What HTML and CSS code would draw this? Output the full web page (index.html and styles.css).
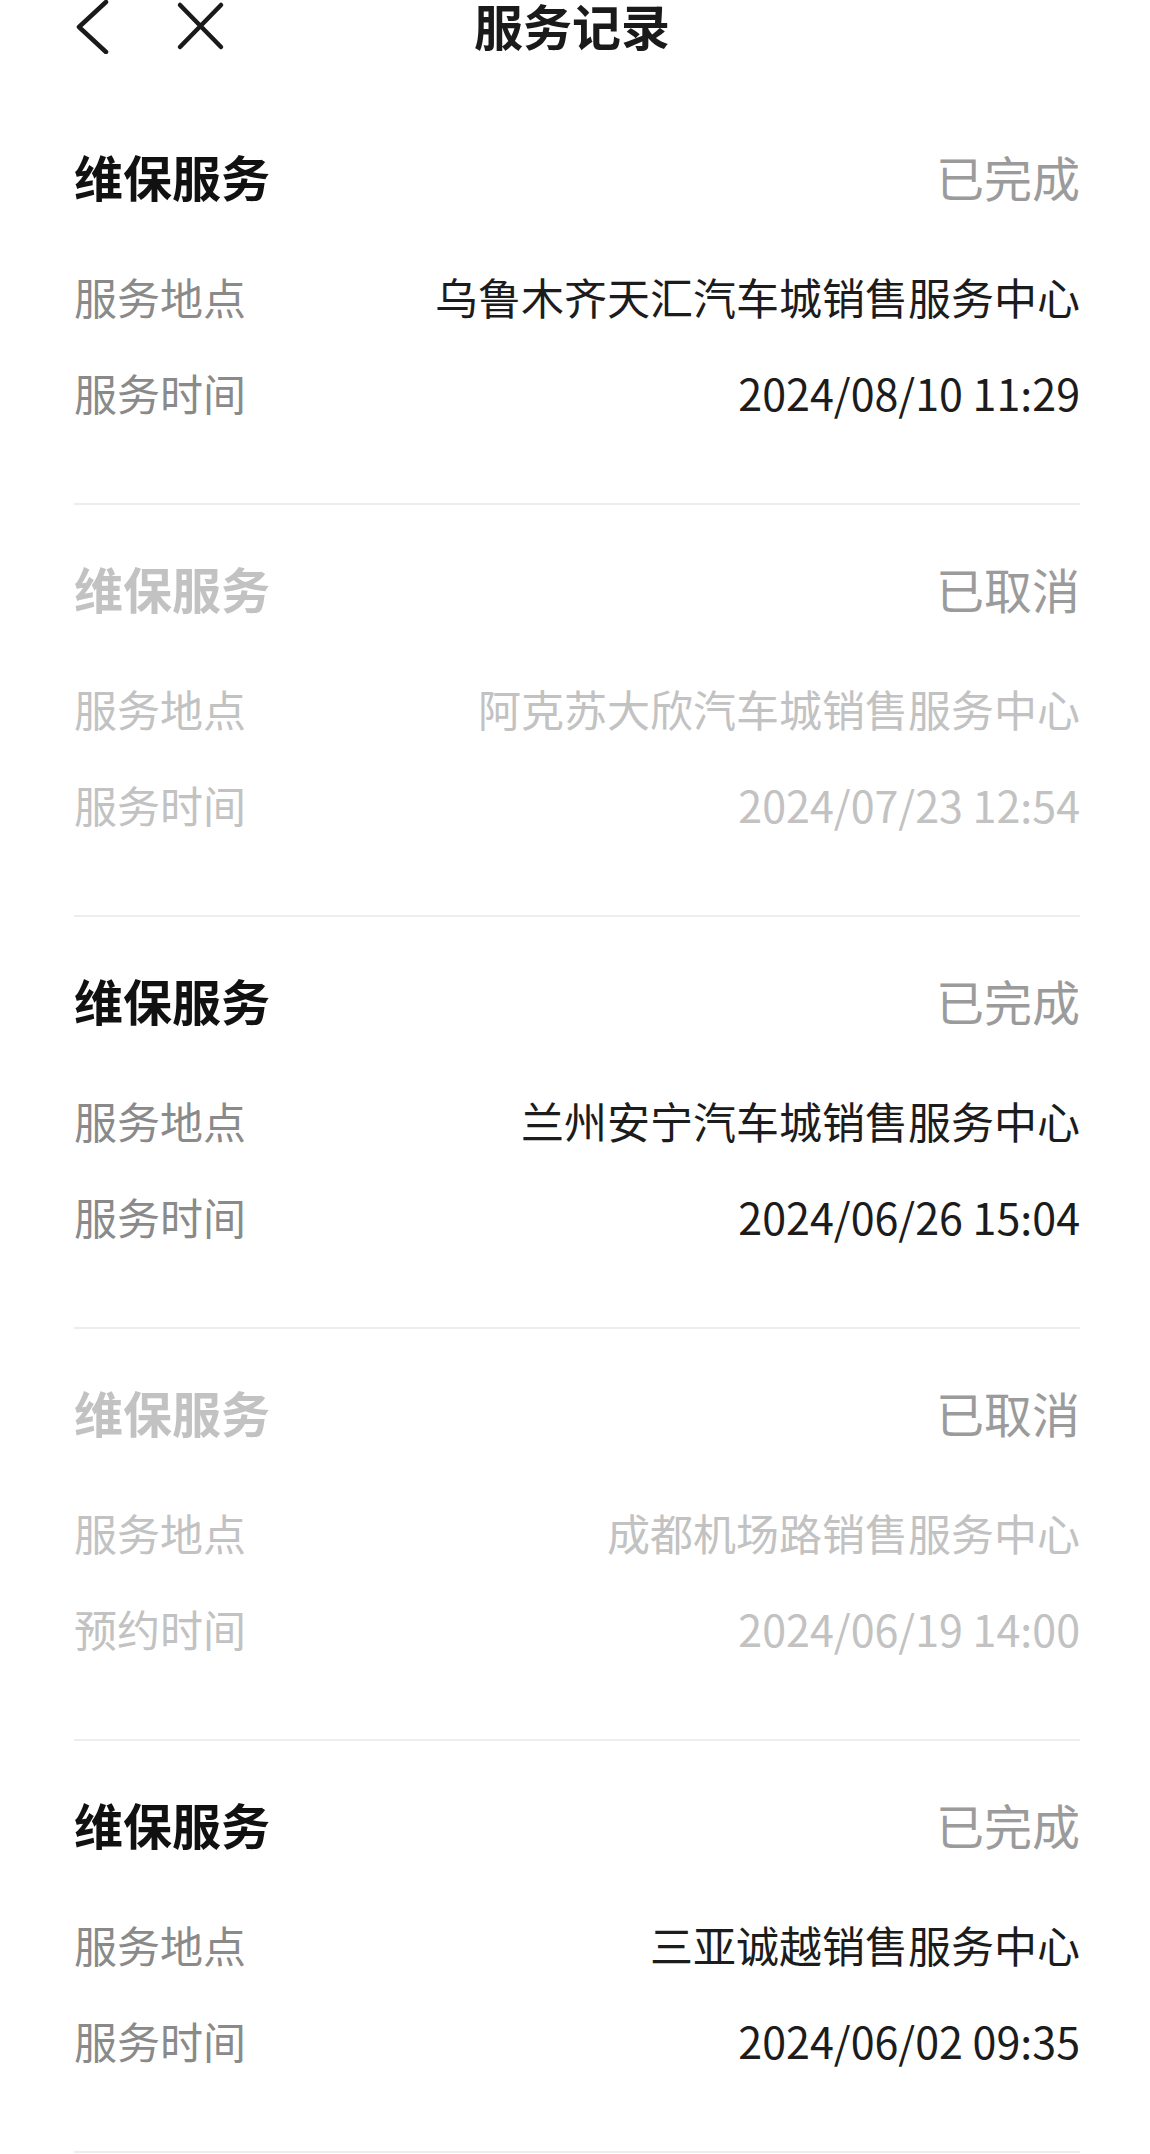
FILE: index.html
```html
<!DOCTYPE html>
<html lang="zh-CN">
<head>
  <meta charset="UTF-8" />
  <title>服务记录</title>
  <link rel="stylesheet" href="styles.css">
</head>
<body>
  <!-- 顶部导航 -->
  <header class="topbar">
    <div class="nav-btns">
      <svg class="ico" width="34" height="54" viewBox="0 0 34 54"><path d="M30 2 L3 27 L30 52" /></svg>
      <svg class="ico" width="50" height="54" viewBox="0 0 50 54"><path d="M4 5 L45 47 M45 5 L4 47" /></svg>
    </div>
    <h1 class="title">服务记录</h1>
    <div></div>
  </header>

  <!-- 记录列表 -->
  <main class="records">
    <section class="record">
      <div class="rec-head"><span class="rec-name">维保服务</span><span class="rec-status">已完成</span></div>
      <div class="row"><span class="k">服务地点</span><span class="v">乌鲁木齐天汇汽车城销售服务中心</span></div>
      <div class="row"><span class="k">服务时间</span><span class="v">2024/08/10 11:29</span></div>
    </section>

    <section class="record off">
      <div class="rec-head"><span class="rec-name">维保服务</span><span class="rec-status">已取消</span></div>
      <div class="row"><span class="k">服务地点</span><span class="v">阿克苏大欣汽车城销售服务中心</span></div>
      <div class="row"><span class="k">服务时间</span><span class="v">2024/07/23 12:54</span></div>
    </section>

    <section class="record">
      <div class="rec-head"><span class="rec-name">维保服务</span><span class="rec-status">已完成</span></div>
      <div class="row"><span class="k">服务地点</span><span class="v">兰州安宁汽车城销售服务中心</span></div>
      <div class="row"><span class="k">服务时间</span><span class="v">2024/06/26 15:04</span></div>
    </section>

    <section class="record off">
      <div class="rec-head"><span class="rec-name">维保服务</span><span class="rec-status">已取消</span></div>
      <div class="row"><span class="k">服务地点</span><span class="v">成都机场路销售服务中心</span></div>
      <div class="row"><span class="k">预约时间</span><span class="v">2024/06/19 14:00</span></div>
    </section>

    <section class="record">
      <div class="rec-head"><span class="rec-name">维保服务</span><span class="rec-status">已完成</span></div>
      <div class="row"><span class="k">服务地点</span><span class="v">三亚诚越销售服务中心</span></div>
      <div class="row"><span class="k">服务时间</span><span class="v">2024/06/02 09:35</span></div>
    </section>
  </main>
</body>
</html>
```

FILE: styles.css
```css
body{margin:0;background:#fff;color:#1a1a1a;font-family:"Noto Sans CJK SC","Noto Sans",sans-serif}

.topbar{display:grid;grid-template-columns:1fr auto 1fr;align-items:start;height:93px;padding:0 70px 0 76px}
.nav-btns{display:flex;gap:66px}
.ico path{fill:none;stroke:#1a1a1a;stroke-width:4.5;stroke-linecap:round;stroke-linejoin:round}
.title{margin:0 0 0 -12px;font-size:49px;line-height:50px;font-weight:700;color:#1a1a1a}

.records{padding:0 70px 0 74px}
.record{padding:50px 0 63px;border-bottom:2px solid #ededed}
.rec-head{display:flex;justify-content:space-between;align-items:center;line-height:66px;margin-bottom:39px}
.rec-name{font-size:49px;font-weight:700;color:#111}
.rec-status{font-size:48px;color:#9b9b9b}
.row{display:flex;justify-content:space-between;font-size:43px;line-height:96px}
.row .k{color:#8a8a8a}
.row .v{color:#1c1c1c}

.record.off .rec-name,.record.off .row .k,.record.off .row .v{color:#c2c2c2}
.record.off .rec-status{color:#9b9b9b}
```
